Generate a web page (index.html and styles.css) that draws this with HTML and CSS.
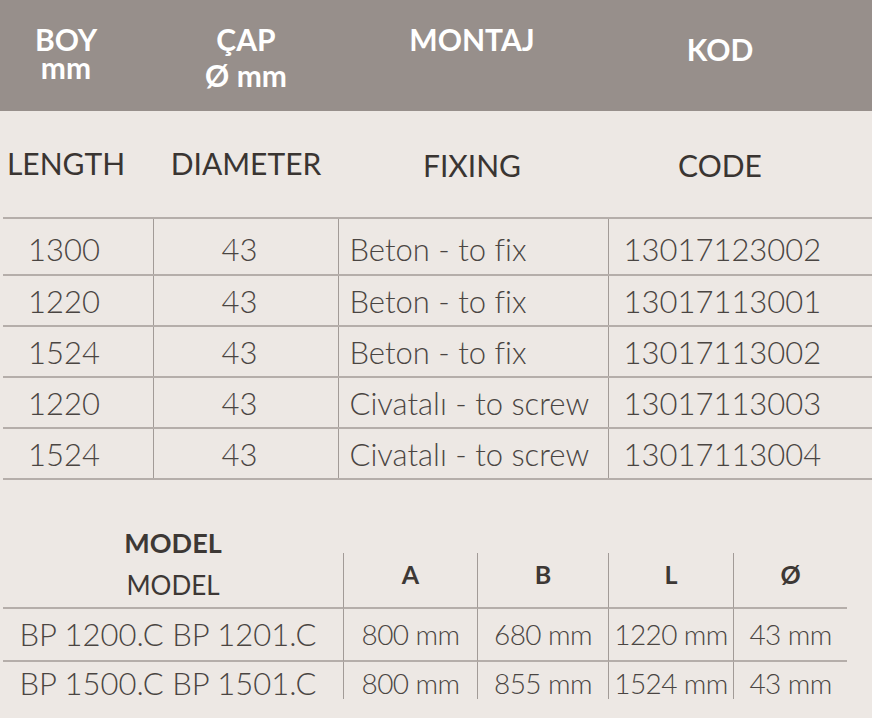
FILE: index.html
```html
<!DOCTYPE html>
<html lang="tr">
<head>
<meta charset="utf-8">
<title>Ürün tablosu</title>
<link rel="stylesheet" href="styles.css">
</head>
<body>
<div class="band">
  <div class="band-cell c1"><span>BOY</span><span>mm</span></div>
  <div class="band-cell c2"><span>ÇAP</span><span class="low">Ø mm</span></div>
  <div class="band-cell c3"><span>MONTAJ</span></div>
  <div class="band-cell c4 kod"><span>KOD</span></div>
</div>
<div class="subhead">
  <div class="sub-cell s1">LENGTH</div>
  <div class="sub-cell s2">DIAMETER</div>
  <div class="sub-cell s3 down">FIXING</div>
  <div class="sub-cell s4 down">CODE</div>
</div>
<table class="codes">
  <colgroup><col class="w1"><col class="w2"><col class="w3"><col class="w4"></colgroup>
  <tbody>
    <tr class="first"><td class="len">1300</td><td class="dia">43</td><td class="fix">Beton - to fix</td><td class="code">13017123002</td></tr>
    <tr><td class="len">1220</td><td class="dia">43</td><td class="fix">Beton - to fix</td><td class="code">13017113001</td></tr>
    <tr><td class="len">1524</td><td class="dia">43</td><td class="fix">Beton - to fix</td><td class="code">13017113002</td></tr>
    <tr><td class="len">1220</td><td class="dia">43</td><td class="fix">Civatalı - to screw</td><td class="code">13017113003</td></tr>
    <tr><td class="len">1524</td><td class="dia">43</td><td class="fix">Civatalı - to screw</td><td class="code">13017113004</td></tr>
  </tbody>
</table>
<div class="models">
  <div class="mh model-head"><span class="mb">MODEL</span><span class="mr">MODEL</span></div>
  <div class="mh dim">A</div>
  <div class="mh dim">B</div>
  <div class="mh dim">L</div>
  <div class="mh dim">Ø</div>

  <div class="mc name r1">BP 1200.C BP 1201.C</div>
  <div class="mc val r1">800 mm</div>
  <div class="mc val r1">680 mm</div>
  <div class="mc val r1">1220 mm</div>
  <div class="mc val r1 last">43 mm</div>

  <div class="mc name r2">BP 1500.C BP 1501.C</div>
  <div class="mc val r2">800 mm</div>
  <div class="mc val r2">855 mm</div>
  <div class="mc val r2">1524 mm</div>
  <div class="mc val r2">43 mm</div>
</div>
</body>
</html>
```
FILE: styles.css
```css
* { box-sizing: border-box; }

html, body {
  margin: 0;
  padding: 0;
}

body {
  background: #ede8e4;
  font-family: Lato, "Noto Sans", sans-serif;
  color: #3d3835;
  width: 872px;
  height: 718px;
  overflow: hidden;
}

/* top band */
.band {
  height: 111px;
  background: #978f8b;
  display: grid;
  grid-template-columns: 132px 228px 224px 272px;
  padding-top: 25px;
  color: #ffffff;
  font-weight: 700;
  font-size: 30px;
  line-height: 28px;
}

.band-cell {
  display: flex;
  flex-direction: column;
  align-items: center;
}

.band-cell .low { margin-top: 8px; }

.band-cell.kod { padding-top: 10px; }

/* sub headings */
.subhead {
  display: grid;
  grid-template-columns: 132px 228px 224px 272px;
  padding-top: 34px;
  height: 106px;
  font-size: 30px;
  line-height: 36px;
  font-weight: 400;
  color: #3a3532;
}

.sub-cell { text-align: center; }
.sub-cell.down { padding-top: 2px; }

/* codes table */
.codes {
  margin-left: 3px;
  width: 869px;
  border-collapse: collapse;
  table-layout: fixed;
  font-size: 31px;
  font-weight: 300;
  color: #4a4542;
  border-top: 2px solid #b5aeaa;
}

.codes .w1 { width: 150px; }
.codes .w2 { width: 185px; }
.codes .w3 { width: 270px; }
.codes .w4 { width: 264px; }

.codes td {
  height: 51px;
  padding: 0;
  vertical-align: middle;
  border-bottom: 2px solid #b5aeaa;
  border-left: 1.5px solid #a29b97;
  white-space: nowrap;
}

.codes td:first-child { border-left: none; }

.codes tr.first td {
  height: 57px;
  padding-top: 4px;
}

.codes .len { padding-left: 25px; }
.codes .dia { text-align: center; padding-right: 12px; }
.codes .fix { padding-left: 11px; }
.codes .code { padding-left: 15px; }

/* models table */
.models {
  margin-top: 47px;
  margin-left: 3px;
  width: 844px;
  display: grid;
  grid-template-columns: 340px 134px 131px 125px 114px;
  color: #4a4542;
}

.mh {
  border-bottom: 2px solid #b5aeaa;
  color: #3d3835;
}

.model-head {
  display: flex;
  flex-direction: column;
  align-items: center;
  padding-bottom: 6px;
}

.model-head .mb {
  font-weight: 700;
  font-size: 27px;
  line-height: 32px;
}

.model-head .mr {
  font-weight: 400;
  font-size: 26px;
  line-height: 32px;
  margin-top: 10px;
}

.dim {
  align-self: end;
  height: 56px;
  border-left: 1.5px solid #a29b97;
  text-align: center;
  font-weight: 700;
  font-size: 25px;
  line-height: 30px;
  padding-top: 6px;
}

.mc {
  font-weight: 300;
  white-space: nowrap;
  text-align: center;
}

.mc.name {
  font-size: 31px;
  padding-right: 10px;
}

.mc.val {
  font-size: 28px;
  letter-spacing: -0.6px;
  border-left: 1.5px solid #a29b97;
}

.mc.r1 {
  height: 53px;
  line-height: 51px;
  border-bottom: 2px solid #b5aeaa;
}

.mc.r2 {
  height: 37px;
  line-height: 42px;
}
```
